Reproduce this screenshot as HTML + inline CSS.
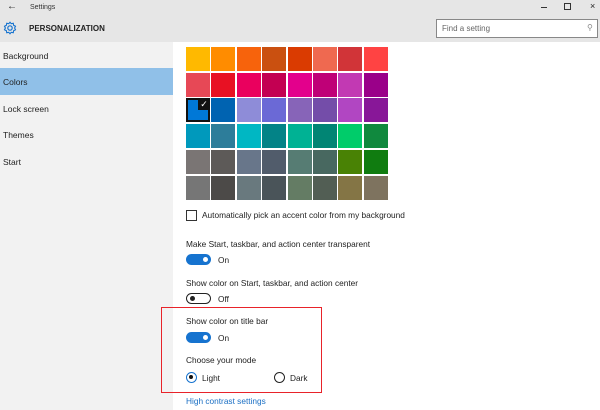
<!DOCTYPE html>
<html><head><meta charset="utf-8">
<style>
*{margin:0;padding:0;box-sizing:border-box}
body{width:600px;height:410px;overflow:hidden;background:#fff;font-family:"Liberation Sans",sans-serif;color:#222;position:relative}
.abs{position:absolute}
.t{font-size:8.3px;color:#222;white-space:nowrap}
.s{font-size:8.5px}
.cell{position:absolute;width:24px;height:24px}
.tog{position:absolute;width:25px;height:11px;border-radius:6px}
.tog.on{background:#1673cf}
.tog.on::after{content:"";position:absolute;right:3px;top:3px;width:5px;height:5px;border-radius:50%;background:#fff}
.tog.off{border:1.5px solid #222;background:#fff}
.tog.off::after{content:"";position:absolute;left:3px;top:2px;width:5px;height:5px;border-radius:50%;background:#222}
</style></head><body>
<div class="abs" style="left:0;top:0;width:600px;height:42px;background:#e6e6e6"></div>
<div class="abs" style="left:0;top:42px;width:173px;height:368px;background:#f2f2f2"></div>
<div class="abs" style="left:0;top:68px;width:173px;height:27px;background:#90c0e8"></div>
<div class="abs t" style="left:7px;top:1px;font-size:10px">&#8592;</div>
<div class="abs t" style="left:30px;top:4px;font-size:7px;color:#333">Settings</div>
<svg class="abs" style="left:3px;top:21px" width="14" height="14" viewBox="0 0 14 14"><circle cx="7" cy="7" r="2.2" fill="none" stroke="#1673cf" stroke-width="1.2"/><path d="M7 1.2 L8.2 2.7 L10.3 2.3 L10.6 4.3 L12.5 5.2 L11.6 7 L12.5 8.8 L10.6 9.7 L10.3 11.7 L8.2 11.3 L7 12.8 L5.8 11.3 L3.7 11.7 L3.4 9.7 L1.5 8.8 L2.4 7 L1.5 5.2 L3.4 4.3 L3.7 2.3 L5.8 2.7Z" fill="none" stroke="#1673cf" stroke-width="1.1"/></svg>
<div class="abs" style="left:29px;top:24px;font-size:8px;font-weight:bold;color:#222">PERSONALIZATION</div>
<div class="abs" style="left:436px;top:19px;width:162px;height:19px;border:1.5px solid #888;background:#fff"></div>
<div class="abs t" style="left:442px;top:24px;font-size:8px;color:#666">Find a setting</div>
<div class="abs t" style="left:587px;top:23px;font-size:8px;color:#888">&#9906;</div>
<div class="abs" style="left:541px;top:7px;width:6px;height:1px;background:#333"></div>
<div class="abs" style="left:564px;top:3px;width:7px;height:7px;border:1px solid #333"></div>
<div class="abs t" style="left:590px;top:1px;font-size:9px">&#215;</div>

<div class="abs t s" style="left:3px;top:51px">Background</div>
<div class="abs t s" style="left:3px;top:77px">Colors</div>
<div class="abs t s" style="left:3px;top:104px">Lock screen</div>
<div class="abs t s" style="left:3px;top:130px">Themes</div>
<div class="abs t s" style="left:3px;top:157px">Start</div>

<div id="grid"></div>
<script>
var c=[["#ffb900","#ff8c00","#f7630c","#ca5010","#da3b01","#ef6950","#d13438","#ff4343"],
["#e74856","#e81123","#ea005e","#c30052","#e3008c","#bf0077","#c239b3","#9a0089"],
["#0078d7","#0063b1","#8e8cd8","#6b69d6","#8764b8","#744da9","#b146c2","#881798"],
["#0099bc","#2d7d9a","#00b7c3","#038387","#00b294","#018574","#00cc6a","#10893e"],
["#7a7574","#5d5a58","#68768a","#515c6b","#567c73","#486860","#498205","#107c10"],
["#767676","#4c4a48","#69797e","#4a5459","#647c64","#525e54","#847545","#7e735f"]];
var h="";for(var r=0;r<6;r++)for(var k=0;k<8;k++){h+='<div class="cell" style="left:'+(186+k*25.4)+'px;top:'+(47+r*25.7)+'px;background:'+c[r][k]+(r==2&&k==0?';border:2px solid #111':'')+'"></div>';}
h+='<div class="abs" style="left:198px;top:98px;width:12px;height:12px;background:#111;color:#fff;font-size:9px;line-height:12px;text-align:center">&#10003;</div>';
document.getElementById("grid").innerHTML=h;
</script>

<div class="abs" style="left:186px;top:210px;width:11px;height:11px;border:1.5px solid #333"></div>
<div class="abs t" style="left:202px;top:210px">Automatically pick an accent color from my background</div>
<div class="abs t" style="left:186px;top:239px">Make Start, taskbar, and action center transparent</div>
<div class="tog on" style="left:186px;top:254px"></div><div class="abs t" style="left:218px;top:255px">On</div>
<div class="abs t" style="left:186px;top:278px">Show color on Start, taskbar, and action center</div>
<div class="tog off" style="left:186px;top:293px"></div><div class="abs t" style="left:218px;top:294px">Off</div>
<div class="abs" style="left:161px;top:307px;width:161px;height:86px;border:1.5px solid #e8232a"></div>
<div class="abs t" style="left:186px;top:316px">Show color on title bar</div>
<div class="tog on" style="left:186px;top:332px"></div><div class="abs t" style="left:218px;top:333px">On</div>
<div class="abs t" style="left:186px;top:355px">Choose your mode</div>
<div class="abs" style="left:186px;top:372px;width:11px;height:11px;border-radius:50%;border:1.5px solid #1673cf;background:#fff"><div style="margin:2px;width:4px;height:4px;border-radius:50%;background:#111"></div></div>
<div class="abs t" style="left:202px;top:373px">Light</div>
<div class="abs" style="left:274px;top:372px;width:11px;height:11px;border-radius:50%;border:1.5px solid #222"></div>
<div class="abs t" style="left:290px;top:373px">Dark</div>
<div class="abs t" style="left:186px;top:396px;color:#1a6fc4">High contrast settings</div>
</body></html>
